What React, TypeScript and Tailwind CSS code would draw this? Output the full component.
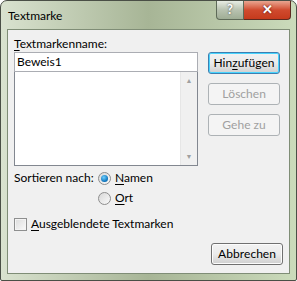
import React from "react";

const font = { fontFamily: 'Lato, "Open Sans", sans-serif' };

const Btn = ({ label, u, disabled, primary }: { label: string; u?: number; disabled?: boolean; primary?: boolean }) => {
  const chars = label.split("");
  return (
    <div
      className={
        "w-[72px] h-[22px] rounded-[3px] border flex items-center justify-center text-[12px] whitespace-pre " +
        (disabled
          ? "border-[#adb2b5] bg-[#f4f4f4] text-[#a0a0a0]"
          : primary
          ? "border-[#3c7fb1] bg-gradient-to-b from-[#f2f2f2] via-[#ebebeb] to-[#cfcfcf] text-black shadow-[inset_0_0_0_1px_#48d4fe]"
          : "border-[#707070] bg-gradient-to-b from-[#f2f2f2] via-[#ebebeb] to-[#cfcfcf] text-black shadow-[inset_0_0_0_1px_#fcfcfc]")
      }
    >
      {chars.map((c, i) => (
        <span key={i} className={i === u ? "underline underline-offset-2" : ""}>
          {c}
        </span>
      ))}
    </div>
  );
};

const Radio = ({ checked }: { checked?: boolean }) => (
  <div className="w-[13px] h-[13px] rounded-full border border-[#8d8d8d] bg-gradient-to-br from-[#d8d8d8] to-[#fafafa] flex items-center justify-center">
    {checked && <div className="w-[7px] h-[7px] rounded-full bg-[radial-gradient(circle_at_40%_35%,#6fd0ff,#0a6fb8_70%)]" />}
  </div>
);

export default function App() {
  return (
    <div className="w-[297px] h-[281px] bg-white" style={font}>
      <div className="w-[297px] h-[281px] rounded-t-[7px] rounded-b-[2px] border border-[#4a4f46] bg-gradient-to-r from-[#d9e2cf] via-[#a7b596] to-[#cbdbbb] flex flex-col px-[6px] pb-[6px]">
        <div className="h-[28px] flex items-start">
          <div className="text-[12px] text-black pt-[6px] pl-[1px]">Textmarke</div>
          <div className="ml-auto flex mr-[-1px]">
            <div className="w-[28px] h-[19px] rounded-bl-[4px] border border-t-0 border-[#5e6a58] bg-gradient-to-b from-[#e8ede4] via-[#b8c2b0] to-[#9fad95] flex items-center justify-center text-white font-bold text-[13px] [text-shadow:0_0_2px_#333]">
              ?
            </div>
            <div className="w-[47px] h-[19px] rounded-br-[4px] border border-t-0 border-l-0 border-[#5e2a20] bg-gradient-to-b from-[#e8a590] via-[#d04a2e] to-[#c53a1c] flex items-center justify-center text-white font-bold text-[13px] [text-shadow:0_0_2px_#400]">
              ✕
            </div>
          </div>
        </div>
        <div className="flex-1 border border-[#7f8d76] bg-[#f0f0f0] flex flex-col px-[6px] pt-[5px] pb-[8px] text-[12px] text-black">
          <div className="flex gap-[10px]">
            <div className="w-[184px] flex flex-col">
              <div className="h-[17px] leading-[17px]">
                <span className="underline underline-offset-2">T</span>extmarkenname:
              </div>
              <div className="h-[20px] border border-[#abadb3] bg-white px-[2px] leading-[18px]">Beweis1</div>
              <div className="h-[94px] border border-t-0 border-[#828790] bg-white flex justify-end">
                <div className="w-[17px] bg-[#f0f0f0] border-l border-[#e6e6e6] flex flex-col items-center justify-between py-[5px] text-[#a0a0a0] text-[7px] leading-none">
                  <span>▲</span>
                  <span>▼</span>
                </div>
              </div>
              <div className="flex mt-[2px] h-[20px] items-center whitespace-nowrap">
                <div className="w-[84px]">Sortieren nach:</div>
                <Radio checked />
                <div className="ml-[4px]">
                  <span className="underline underline-offset-2">N</span>amen
                </div>
              </div>
              <div className="flex h-[20px] items-center pl-[84px]">
                <Radio />
                <div className="ml-[4px]">
                  <span className="underline underline-offset-2">O</span>rt
                </div>
              </div>
            </div>
            <div className="flex flex-col gap-[9px] pt-[17px]">
              <Btn label="Hinzufügen" u={3} primary />
              <Btn label="Löschen" disabled />
              <Btn label="Gehe zu" disabled />
            </div>
          </div>
          <div className="flex items-center mt-[8px] h-[16px]">
            <div className="w-[13px] h-[13px] border border-[#8e8f8f] bg-gradient-to-br from-[#dcdcdc] to-[#fafafa] shadow-[inset_0_0_0_1px_#f4f4f4]" />
            <div className="ml-[4px]">
              <span className="underline underline-offset-2">A</span>usgeblendete Textmarken
            </div>
          </div>
          <div className="mt-auto flex justify-end">
            <Btn label="Abbrechen" />
          </div>
        </div>
      </div>
    </div>
  );
}
